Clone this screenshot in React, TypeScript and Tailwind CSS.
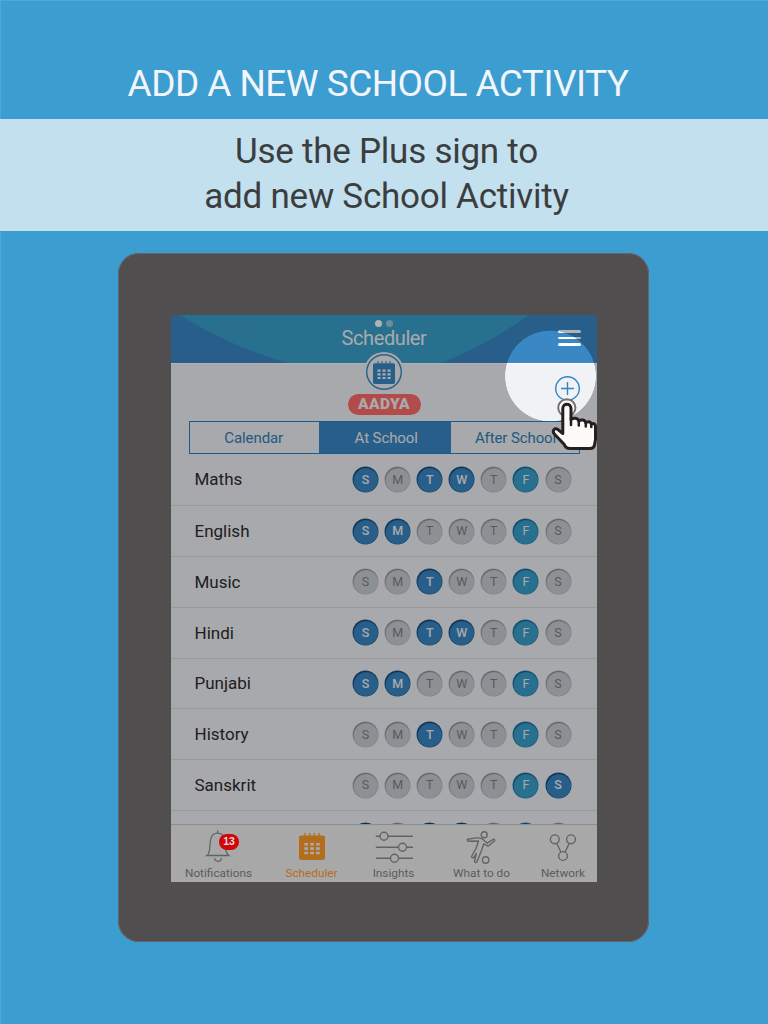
import type { ReactNode } from "react";

const DAYS = ["S", "M", "T", "W", "T", "F", "S"];

const SUBJECTS: { name: string; on: number[] }[] = [
  { name: "Maths", on: [0, 2, 3] },
  { name: "English", on: [0, 1] },
  { name: "Music", on: [2] },
  { name: "Hindi", on: [0, 2, 3] },
  { name: "Punjabi", on: [0, 1] },
  { name: "History", on: [2] },
  { name: "Sanskrit", on: [6] },
  { name: "", on: [0, 2, 3] },
];

function Day({ label, index, active }: { label: string; index: number; active: boolean }) {
  const base =
    "flex h-[25px] w-[25px] items-center justify-center rounded-full pt-px text-[12.5px] leading-none ";
  const tone =
    index === 5
      ? "bg-[#39a0cc] text-[#f1f2f6] shadow-[inset_0.5px_1px_1px_#0f5f90,0_0_0_0.5px_#2d7fa8]"
      : active
        ? "bg-[#3988c5] font-medium text-[#f1f2f6] shadow-[inset_0.5px_1px_1px_#123a66,0_0_0_0.5px_#245f90]"
        : "bg-[#c9cfd4] text-[#7d8185] shadow-[inset_0.5px_1px_1px_#85898d,0_0_0_0.5px_#b5babd]";
  return <span className={base + tone}>{label}</span>;
}

function CalendarIcon({ className }: { className: string }) {
  return (
    <svg viewBox="0 0 26 27" className={className}>
      <path
        d="M2 2.5H24Q26 2.5 26 4.5V25Q26 27 24 27H2Q0 27 0 25V4.5Q0 2.5 2 2.5Z"
        fill="currentColor"
      />
      <path d="M6 0V3M10.7 0V3M15.3 0V3M20 0V3" stroke="currentColor" strokeWidth="1.3" />
      <path d="M5.3 11.2H9M11.2 11.2H14.9M17.1 11.2H20.8M5.3 15.6H9M11.2 15.6H14.9M17.1 15.6H20.8M5.3 20H9M11.2 20H14.9M17.1 20H20.8" stroke="#f1f2f6" strokeWidth="2.6" />
    </svg>
  );
}

function BellIcon() {
  return (
    <svg width="40" height="34" viewBox="0 0 40 34" fill="none" stroke="#8c8e90" strokeWidth="1.3">
      <path d="M18.7 .5V3.2M8 25.5C11 23.5 10.8 19 11.1 13C11.5 6.5 14.3 3.2 18.7 3.2S25.7 6.5 26 13C26.2 19 26.7 23.5 29.7 25.5Z" />
      <path d="M15.5 28Q16 31.3 19 31.3T22.4 28" />
    </svg>
  );
}

function SlidersIcon() {
  return (
    <svg width="40" height="34" viewBox="0 0 40 34" fill="none" stroke="#8c8e90" strokeWidth="1.4">
      <path d="M1.8 6.2H6M14 6.2H39M1.8 17.2H24.5M32.5 17.2H39M1.8 28.2H16.5M24.5 28.2H39" />
      <circle cx="10" cy="6.2" r="4" />
      <circle cx="28.5" cy="17.2" r="4" />
      <circle cx="20.5" cy="28.2" r="4" />
    </svg>
  );
}

function PlayerIcon() {
  return (
    <svg width="40" height="34" viewBox="0 0 40 34" fill="none" stroke="#8c8e90" strokeWidth="1.4" strokeLinejoin="round">
      <circle cx="22.2" cy="4.7" r="3" />
      <circle cx="23.6" cy="30" r="3.2" />
      <path d="M5.5 9.3L14 7.9Q18 7.700 20.5 9L25.300 13.200L31.300 9.300Q33.500 9.300 32.300 11.300L26 16.200L21.700 13.800L19.900 19.500L17.300 26L15 31.800Q13.500 33.500 12.500 31.500L14.300 23.500L11.900 27.300Q10 28.500 9.500 26.500L14 18.500L16.500 11L6.500 11.200Q4.700 10.500 5.500 9.300Z" />
    </svg>
  );
}

function NetworkIcon() {
  return (
    <svg width="40" height="34" viewBox="0 0 40 34" fill="none" stroke="#8c8e90" strokeWidth="1.4">
      <circle cx="11.8" cy="9.3" r="4.4" />
      <circle cx="28" cy="9.3" r="4.4" />
      <circle cx="20" cy="26" r="4.4" />
      <path d="M13.7 13.2L18 22.2M26.2 13.2L22 22.2" />
    </svg>
  );
}

function NavItem({ label, width, active, children }: { label: string; width: string; active?: boolean; children: ReactNode }) {
  return (
    <div className={"flex flex-col items-center whitespace-nowrap pt-[5px] " + width}>
      <div className="flex h-[34px] items-start justify-center">{children}</div>
      <span className={"text-[11.8px] leading-[18px] " + (active ? "text-[#ff9c2a]" : "text-[#838588]")}>{label}</span>
    </div>
  );
}

function Hand() {
  return (
    <svg className="absolute left-[379px] top-[82px] z-30 overflow-visible" width="50" height="56" viewBox="0 0 50 56" fill="none">
      <circle cx="16.8" cy="10.8" r="8.6" stroke="#77716f" strokeWidth="2" fill="#ffffffb0" />
      <path
        d="M12.800 11.500C12.800 5.700 21 5.700 21 11.500V22.500C23 20.500 28 20.600 28.800 24C31 22.200 35 22.500 35.800 25.800C37.800 24 40.800 24.300 41.300 27.200C43.500 25.800 45.500 27 45.500 29.500V42.500L44.500 48Q44 51.500 40 51.500H20Q15.500 51.500 14.300 47.500L4.300 37C1.800 33.500 4.500 30.200 8 32.600L12.800 36.500Z"
        fill="#fdfbf8"
        stroke="#231f20"
        strokeWidth="3"
        strokeLinejoin="round"
      />
      <path d="M21 21.5V28M28.8 24V28.5M35.8 25.8V29.5M41.3 27.2V30" stroke="#231f20" strokeWidth="2.5" strokeLinecap="round" />
    </svg>
  );
}

export default function App() {
  return (
    <main className="h-[1024px] w-[768px] overflow-hidden bg-[#3c9dd0] font-['Roboto',sans-serif] shadow-[inset_1px_1px_0_#ffffff1c]">
      <h1 className="flex h-[119px] items-center justify-center pr-3 pt-[47px] text-[37px] leading-none tracking-[-0.54px] whitespace-nowrap text-[#f2f6fc]">
        ADD A NEW SCHOOL ACTIVITY
      </h1>
      <p className="h-[112px] bg-[#c3e0ee] pt-[10px] pl-[5px] text-center text-[35px] leading-[45px] tracking-[-0.25px] text-[#3c3d3f]">
        Use the Plus sign to
        <br />
        add new School Activity
      </p>

      <div className="mt-[22px] ml-[118px] h-[689px] w-[531px] rounded-[21px] bg-[#514e4f] pt-[62px] pl-[53px] shadow-[inset_0_0_0_1px_#676567]">
        <div className="relative flex h-[567px] w-[426px] flex-col overflow-hidden bg-[#f1f2f6]">
          <header className="relative h-12 shrink-0 bg-[#3988c5]">
            <svg className="absolute inset-0" width="426" height="48" viewBox="0 0 426 48">
              <path d="M9 0Q58 31 117 48H270Q320 28 357 0Z" fill="#39a0cc" />
            </svg>
            <div className="relative flex flex-col items-center pt-[4.5px]">
              <div className="flex gap-[4px]">
                <i className="h-[7px] w-[7px] rounded-full bg-white" />
                <i className="h-[7px] w-[7px] rounded-full bg-[#9dc9e0]" />
              </div>
              <h2 className="text-[20px] leading-[23px] tracking-[-0.4px] text-[#f1f2f6]">Scheduler</h2>
            </div>
            <div className="absolute top-[15px] right-4 flex w-[23px] flex-col gap-[4px]">
              <i className="h-[2.5px] rounded bg-white" />
              <i className="h-[2.5px] rounded bg-white" />
              <i className="h-[2.5px] rounded bg-white" />
            </div>
          </header>

          <section className="relative flex h-[58px] shrink-0 flex-col items-center border-t border-white">
            <div className="-mt-[12px] flex h-10 w-10 items-center justify-center rounded-full bg-[#f1f2f6]">
              <div className="flex h-[36px] w-[36px] items-center justify-center rounded-full text-[#3988c5] shadow-[inset_0_0_0_1.4px_#3988c5]">
                <CalendarIcon className="h-[23px] w-[22px]" />
              </div>
            </div>
            <div className="mt-[2px] flex h-[21px] w-[73px] items-center justify-center rounded-full bg-[#ff6c69] pt-px text-[15.5px] font-black tracking-[0.4px] text-[#f1f2f6]">
              AADYA
            </div>
            <svg className="absolute top-[12px] left-[384px]" width="26" height="26" viewBox="0 0 26 26" fill="none" stroke="#2d87c4" strokeWidth="1.4">
              <circle cx="12.5" cy="12.5" r="11.8" />
              <path d="M12.5 6V19M6 12.5H19" />
            </svg>
          </section>

          <div className="mx-[18px] flex h-[33px] w-[391px] shrink-0 bg-[#2583c8] p-[1.2px] text-[15px] tracking-[-0.1px] text-[#2f7fb9]">
            <div className="flex w-[129px] items-center justify-center bg-[#f1f2f6] pt-px pr-[2px]">Calendar</div>
            <div className="flex w-[132px] items-center justify-center bg-[#3988c5] pt-px pl-[2px] text-[#f1f2f6]">At School</div>
            <div className="flex flex-1 items-center justify-center bg-[#f1f2f6] pt-px pl-px whitespace-nowrap">After School</div>
          </div>

          <ul className="min-h-0 flex-1 overflow-hidden pt-[1.7px]">
            {SUBJECTS.map((s, row) => (
              <li
                key={row}
                className={
                  "flex items-center justify-between border-b border-[#dadcdf] pr-[26.5px] pl-[23.5px] " +
                  (row === 0 ? "h-[50.5px] pb-[2px]" : "h-[50.8px]")
                }
              >
                <span className="pt-[1.5px] text-[17px] text-[#2b2c2e]">{s.name}</span>
                <span className="flex gap-[7.08px]">
                  {DAYS.map((d, i) => (
                    <Day key={i} label={s.name ? d : ""} index={i} active={s.on.includes(i)} />
                  ))}
                </span>
              </li>
            ))}
          </ul>

          <nav className="flex h-[58px] shrink-0 border-t border-[#c4cad0] bg-[#f1f1f2]">
            <NavItem label="Notifications" width="w-[95px]">
              <BellIcon />
            </NavItem>
            <NavItem label="Scheduler" width="w-[91px]" active>
              <CalendarIcon className="mt-[3px] h-[27px] w-[26px] text-[#ff9c2a]" />
            </NavItem>
            <NavItem label="Insights" width="w-[73px]">
              <SlidersIcon />
            </NavItem>
            <NavItem label="What to do" width="w-[103px]">
              <PlayerIcon />
            </NavItem>
            <NavItem label="Network" width="w-[60px]">
              <NetworkIcon />
            </NavItem>
          </nav>

          <div className="absolute inset-0 z-20 bg-[radial-gradient(circle_at_379.5px_61px,transparent_45px,#0000004d_45.7px)]" />
          <span className="absolute top-[519px] left-[48px] z-30 flex h-[16px] w-[20px] items-center justify-center rounded-full bg-[#d20509] font-['Liberation_Sans',sans-serif] text-[10.5px] font-bold text-[#e6dddd]">
            13
          </span>
          <Hand />
        </div>
      </div>
    </main>
  );
}
